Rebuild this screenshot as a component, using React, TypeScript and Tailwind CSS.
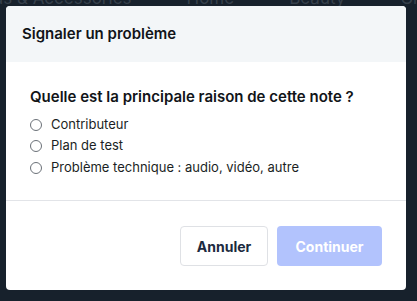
import React from 'react';

const options = ['Contributeur', 'Plan de test', 'Problème technique : audio, vidéo, autre'];

export default function App() {
  return (
    <div
      className="relative h-[301px] w-[417px] overflow-hidden bg-[#17212c]"
      style={{ fontFamily: 'Inter, "Open Sans", sans-serif' }}
    >
      {/* page behind the modal */}
      <div className="-mt-[14px] flex gap-[55px] text-[17px] leading-[24px] text-[#36404b] whitespace-nowrap">
        <span className="-ml-[38px]">Beads &amp; Accessories</span>
        <span>Home</span>
        <span>Beauty</span>
        <span>Gifts</span>
      </div>

      <div className="absolute left-[6px] top-[6px] w-[400px] overflow-hidden rounded-[4px] bg-white">
        <div className="flex h-[56px] items-center bg-[#f3f6f8] px-4">
          <h2 className="text-[15px] font-semibold text-[#111418]">Signaler un problème</h2>
        </div>

        <div className="border-b border-[#e2e4e8] px-6 pt-[25px] pb-[24px]">
          <p className="text-[15px] font-semibold leading-[20px] text-[#111418]">Quelle est la principale raison de cette note ?</p>
          <div className="mt-[9px] flex flex-col gap-[4.5px]">
            {options.map((o) => (
              <label key={o} className="flex h-[17px] items-center gap-[9px] text-[13px] text-[#1b1f24]">
                <span className="h-[12px] w-[12px] rounded-full border border-[#6b7178] bg-white" />
                {o}
              </label>
            ))}
          </div>
        </div>

        <div className="flex justify-end gap-[9px] px-6 pt-[25px] pb-[24px]">
          <button className="h-[40px] w-[88px] rounded-[4px] border border-[#dfe1e5] bg-white text-[14px] font-bold text-[#1c2a40]">
            Annuler
          </button>
          <button className="h-[40px] w-[105px] rounded-[4px] bg-[#b2c3fd] text-[14px] font-bold text-white">
            Continuer
          </button>
        </div>
      </div>
    </div>
  );
}
